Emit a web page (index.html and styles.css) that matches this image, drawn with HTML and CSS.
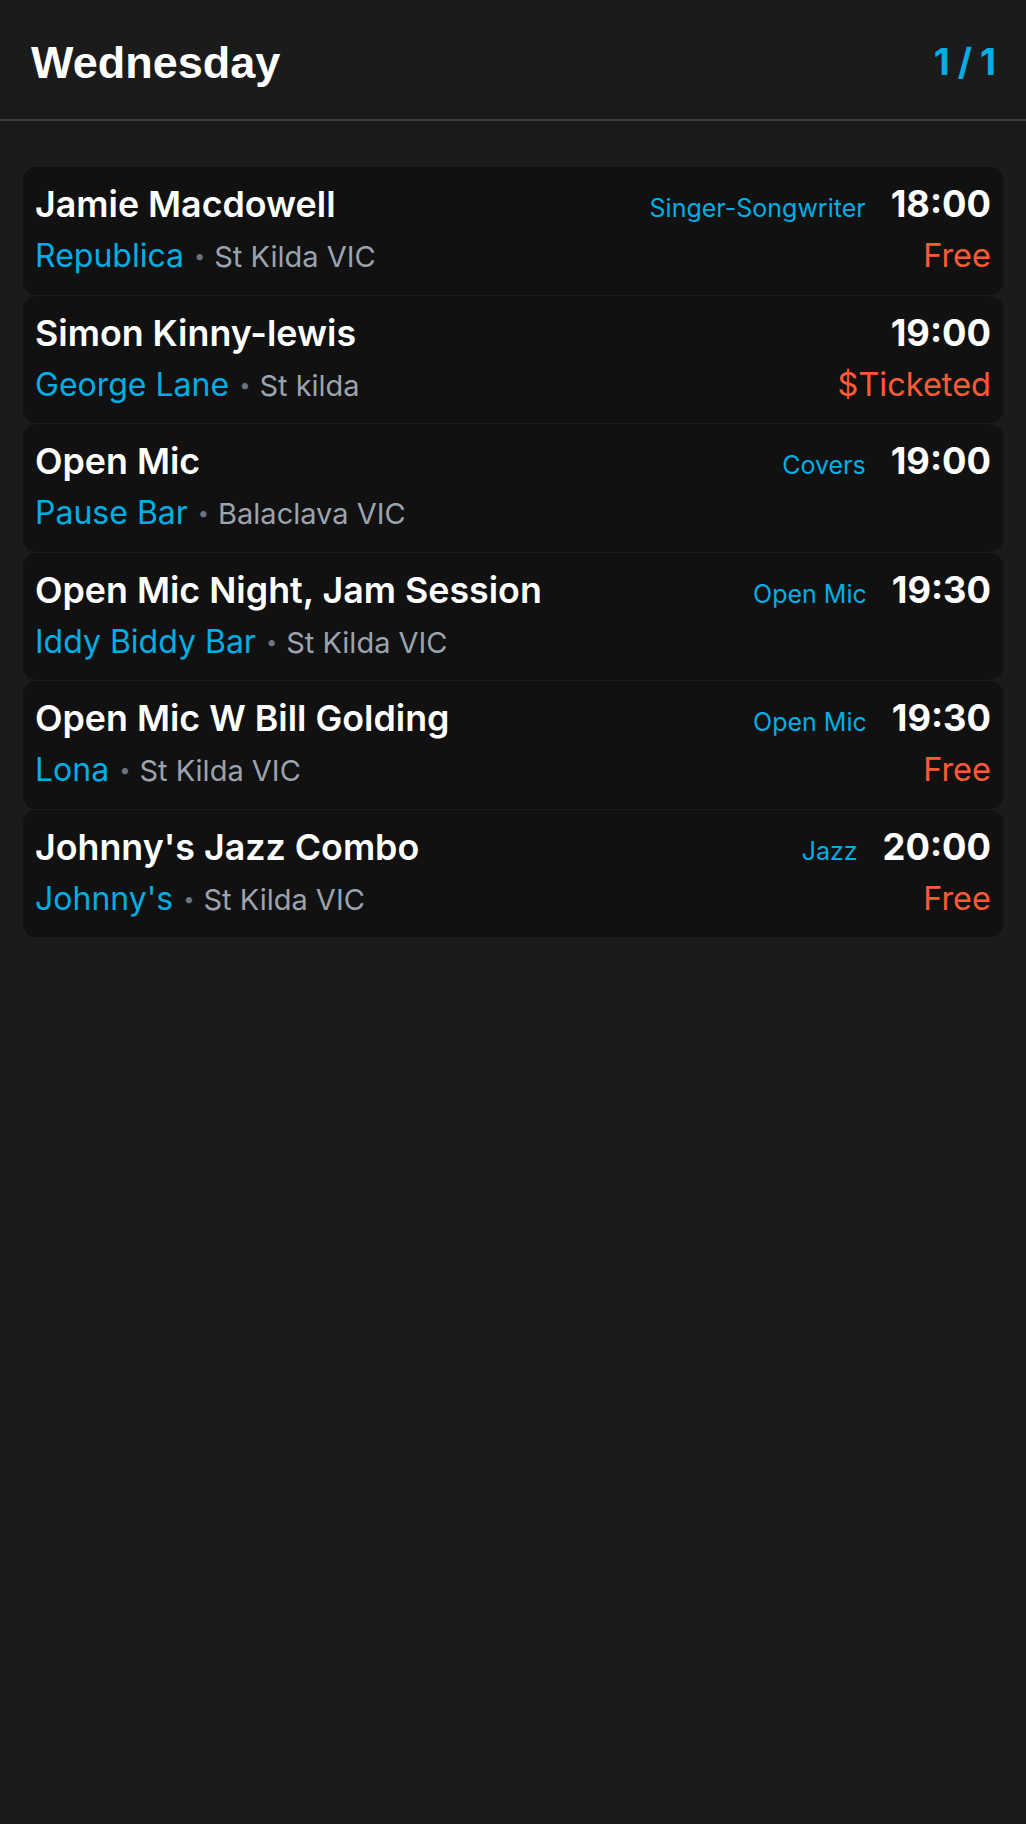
FILE: index.html
```html
<!DOCTYPE html>
<html lang="en">
<head>
<meta charset="utf-8">
<title>Wednesday</title>
<link rel="stylesheet" href="styles.css">
</head>
<body>
<header class="topbar">
  <h1 class="day">Wednesday</h1>
  <div class="pager">1/1</div>
</header>
<main class="list">
  <article class="card">
    <div class="row row-top">
      <span class="title">Jamie Macdowell</span>
      <span class="genre">Singer-Songwriter</span>
      <span class="time">18:00</span>
    </div>
    <div class="row row-bottom">
      <span class="venue">Republica</span><span class="dot">•</span><span class="place">St Kilda VIC</span>
      <span class="price">Free</span>
    </div>
  </article>
  <article class="card">
    <div class="row row-top">
      <span class="title">Simon Kinny-lewis</span>
      <span class="time">19:00</span>
    </div>
    <div class="row row-bottom">
      <span class="venue">George Lane</span><span class="dot">•</span><span class="place">St kilda</span>
      <span class="price">$Ticketed</span>
    </div>
  </article>
  <article class="card">
    <div class="row row-top">
      <span class="title">Open Mic</span>
      <span class="genre">Covers</span>
      <span class="time">19:00</span>
    </div>
    <div class="row row-bottom">
      <span class="venue">Pause Bar</span><span class="dot">•</span><span class="place">Balaclava VIC</span>
    </div>
  </article>
  <article class="card">
    <div class="row row-top">
      <span class="title">Open Mic Night, Jam Session</span>
      <span class="genre">Open Mic</span>
      <span class="time">19:30</span>
    </div>
    <div class="row row-bottom">
      <span class="venue">Iddy Biddy Bar</span><span class="dot">•</span><span class="place">St Kilda VIC</span>
    </div>
  </article>
  <article class="card">
    <div class="row row-top">
      <span class="title">Open Mic W Bill Golding</span>
      <span class="genre">Open Mic</span>
      <span class="time">19:30</span>
    </div>
    <div class="row row-bottom">
      <span class="venue">Lona</span><span class="dot">•</span><span class="place">St Kilda VIC</span>
      <span class="price">Free</span>
    </div>
  </article>
  <article class="card">
    <div class="row row-top">
      <span class="title">Johnny's Jazz Combo</span>
      <span class="genre">Jazz</span>
      <span class="time">20:00</span>
    </div>
    <div class="row row-bottom">
      <span class="venue">Johnny's</span><span class="dot">•</span><span class="place">St Kilda VIC</span>
      <span class="price">Free</span>
    </div>
  </article>
</main>
</body>
</html>
```
FILE: styles.css
```css
* { box-sizing: border-box; }
html, body {
  margin: 0;
  padding: 0;
  background: #1b1b1b;
  color: #ffffff;
  font-family: Inter, "Noto Sans", sans-serif;
}
body { min-height: 1824px; }

.topbar {
  height: 121px;
  display: flex;
  align-items: center;
  justify-content: space-between;
  padding: 0 30px 0 31px;
  border-bottom: 2px solid #363c46;
}
.day {
  margin: 7px 0 0 0;
  font-family: "Liberation Sans", Arial, sans-serif;
  font-weight: 700;
  font-size: 45px;
  color: #ffffff;
}
.pager {
  margin: 4px -8px 0 0;
  font-family: Inter, sans-serif;
  font-weight: 700;
  font-size: 37px;
  letter-spacing: 8px;
  color: #00aee3;
}

.list {
  display: flex;
  flex-direction: column;
  gap: 1px;
  padding: 46px 23px 0 23px;
}
.card {
  background: #111111;
  border-radius: 13px;
  padding: 12px 12px 0 12px;
  height: 127.5px;
}
.row {
  display: flex;
  align-items: baseline;
}
.row-top { height: 50px; }
.row-bottom { height: 50px; margin-top: 2px; }

.title {
  flex: 1;
  font-size: 35.8px;
  font-weight: 600;
  color: #ffffff;
  line-height: 50px;
}
.genre {
  font-size: 25px;
  color: #00aee3;
  margin-right: 25px;
}
.time {
  font-size: 36.3px;
  font-weight: 700;
  color: #ffffff;
}
.venue {
  font-size: 32px;
  color: #00aee3;
  line-height: 50px;
}
.dot {
  font-size: 20px;
  color: #6b7280;
  margin: 0 9px 0 10px;
  position: relative;
  top: -4px;
}
.place {
  font-size: 29px;
  color: #9ca3af;
  flex: 1;
}
.price {
  font-size: 32.5px;
  color: #ff5a36;
}
```
